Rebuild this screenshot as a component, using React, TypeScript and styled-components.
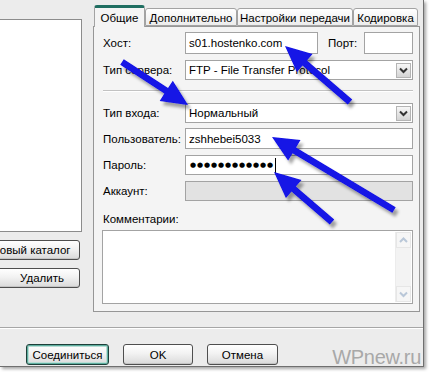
import React from "react";
import styled, { createGlobalStyle } from "styled-components";

const GlobalStyle = createGlobalStyle`
  html, body {
    margin: 0;
    padding: 0;
    background: #fff;
  }
  body {
    font-family: "Liberation Sans", Arial, sans-serif;
    font-size: 11.5px;
    color: #000;
  }
  #root {
    width: 429px;
    height: 372px;
    overflow: hidden;
  }
`;

const Window = styled.div`
  position: relative;
  width: 424px;
  height: 367px;
  box-sizing: border-box;
  background: #ececec;
  border-right: 1px solid #6f6f6f;
  border-bottom: 1px solid #6f6f6f;
  box-shadow: 2px 2px 3px rgba(0, 0, 0, 0.35);
  display: flex;
  flex-direction: column;
`;

const Top = styled.div`
  display: flex;
  align-items: flex-start;
  height: 313px;
`;

const LeftCol = styled.div`
  width: 102px;
  margin-left: -20px;
  margin-top: 19px;
  display: flex;
  flex-direction: column;
  align-items: flex-end;
`;

const ListBox = styled.div`
  width: 102px;
  height: 213px;
  box-sizing: border-box;
  background: #fff;
  border: 1px solid #8c8c8c;
`;

const Button = styled.div<{ $w: number; $default?: boolean; $indent?: number }>`
  width: ${(p) => p.$w}px;
  height: 21px;
  box-sizing: border-box;
  display: flex;
  align-items: center;
  justify-content: center;
  padding-left: ${(p) => p.$indent || 0}px;
  border: 1px solid ${(p) => (p.$default ? "#1d3f39" : "#4e4e4e")};
  border-radius: 3px;
  background: linear-gradient(#ffffff, #f2f2f2 45%, #d9d9d9);
  box-shadow: ${(p) =>
    p.$default ? "inset 0 0 0 1px #5fae9f, inset 0 0 0 2px #b9ddd5" : "inset 0 -1px 0 #c4c4c4"};
  white-space: nowrap;
`;

const SideButton = styled(Button)`
  margin-top: 8px;
  margin-right: 2px;
  height: 20px;
`;

const TabsCol = styled.div`
  width: 327px;
  margin-left: 11px;
  margin-top: 5px;
  display: flex;
  flex-direction: column;
`;

const TabStrip = styled.div`
  display: flex;
  align-items: flex-end;
  height: 21px;
  padding-left: 1px;
  position: relative;
  z-index: 1;
`;

const Tab = styled.div<{ $w: number; $active?: boolean }>`
  width: ${(p) => p.$w}px;
  height: ${(p) => (p.$active ? 22 : 18)}px;
  box-sizing: border-box;
  display: flex;
  align-items: center;
  justify-content: center;
  padding-top: ${(p) => (p.$active ? 0 : 1)}px;
  border: 1px solid #a3a3a3;
  border-bottom: ${(p) => (p.$active ? "none" : "1px solid #a3a3a3")};
  border-top: ${(p) => (p.$active ? "3px solid #1f6e61" : "1px solid #a3a3a3")};
  border-radius: 3px 3px 0 0;
  background: ${(p) => (p.$active ? "#f4f4f4" : "linear-gradient(#ffffff, #ececec)")};
  margin-bottom: ${(p) => (p.$active ? -1 : 0)}px;
  white-space: nowrap;
`;

const Panel = styled.div`
  height: 286px;
  box-sizing: border-box;
  background: #f4f4f4;
  border: 1px solid #969696;
  padding: 5px 6px 0 9px;
  display: flex;
  flex-direction: column;
`;

const Row = styled.div<{ $mt: number; $h: number }>`
  display: flex;
  align-items: center;
  margin-top: ${(p) => p.$mt}px;
  height: ${(p) => p.$h}px;
`;

const Label = styled.div<{ $w?: number }>`
  width: ${(p) => p.$w || 82}px;
  flex-shrink: 0;
  white-space: nowrap;
`;

const Field = styled.div<{ $w?: number; $disabled?: boolean }>`
  ${(p) => (p.$w ? `width: ${p.$w}px;` : "flex: 1;")}
  height: 100%;
  box-sizing: border-box;
  display: flex;
  align-items: center;
  padding-left: 3px;
  border: 1px solid #a3a3a3;
  background: ${(p) => (p.$disabled ? "#e2e2e2" : "#fff")};
  white-space: nowrap;
  overflow: hidden;
`;

const FieldText = styled.span`
  flex: 1;
  overflow: hidden;
`;

const DropButton = styled.div`
  width: 15px;
  height: 15px;
  margin-right: 1px;
  box-sizing: border-box;
  border: 1px solid #b4b4b4;
  background: linear-gradient(#f7f7f7, #d4d4d4);
  display: flex;
  align-items: center;
  justify-content: center;
`;

const PortLabel = styled.div`
  margin-left: 10px;
  width: 36px;
`;

const Separator = styled.div`
  margin-top: 10px;
  height: 0;
  border-top: 1px solid #c2c2c2;
  border-bottom: 1px solid #fff;
`;

const Dots = styled.span`
  font-family: "DejaVu Sans", sans-serif;
  font-size: 7px;
  letter-spacing: 0.9px;
  margin-left: 1px;
`;

const Caret = styled.span`
  display: inline-block;
  width: 1px;
  height: 15px;
  background: #000;
  margin-left: 1px;
`;

const CommentLabel = styled.div`
  margin-top: 11px;
  height: 14px;
  line-height: 14px;
`;

const TextArea = styled.div`
  margin-top: 4px;
  margin-left: -1px;
  height: 74px;
  box-sizing: border-box;
  border: 1px solid #a3a3a3;
  background: #fff;
  display: flex;
  justify-content: flex-end;
  padding: 1px;
`;

const ScrollBar = styled.div`
  width: 15px;
  background: #f3f3f3;
  border-left: 1px solid #ececec;
  display: flex;
  flex-direction: column;
  justify-content: space-between;
`;

const ScrollArrow = styled.div`
  height: 16px;
  box-sizing: border-box;
  border: 1px solid #e6e6e6;
  background: #f6f6f6;
  display: flex;
  align-items: center;
  justify-content: center;
`;

const BottomSep = styled.div`
  margin-top: 15px;
  border-top: 1px solid #a6a6a6;
  border-bottom: 1px solid #fff;
`;

const ButtonRow = styled.div`
  display: flex;
  align-items: center;
  gap: 14px;
  margin-top: 11px;
  padding-left: 26px;
`;

const Watermark = styled.div`
  margin-left: auto;
  margin-right: 2px;
  margin-top: 6px;
  font-family: "Liberation Sans", Arial, sans-serif;
  font-size: 20px;
  color: #a8a8a8;
  letter-spacing: -0.3px;
`;

const Overlay = styled.svg`
  position: absolute;
  left: 0;
  top: 0;
  pointer-events: none;
`;

const Chevron = ({ color = "#333" }: { color?: string }) => (
  <svg width="9" height="7" viewBox="0 0 9 7">
    <polyline points="1,1.5 4.5,5 8,1.5" fill="none" stroke={color} strokeWidth="2" />
  </svg>
);

const Select = ({ text }: { text: string }) => (
  <Field>
    <FieldText>{text}</FieldText>
    <DropButton>
      <Chevron />
    </DropButton>
  </Field>
);

const arrows = [
  [122, 62, 188, 105],
  [350, 102, 285, 46],
  [394, 210, 272, 137],
  [332, 222, 274, 172],
];

const arrowShape = (x1: number, y1: number, x2: number, y2: number) => {
  const len = Math.hypot(x2 - x1, y2 - y1);
  const ux = (x2 - x1) / len;
  const uy = (y2 - y1) / len;
  const nx = -uy;
  const ny = ux;
  const sw = 3.3;
  const hl = 26;
  const hw = 12;
  const bx = x2 - ux * hl;
  const by = y2 - uy * hl;
  const pts = [
    [x1 + nx * sw, y1 + ny * sw],
    [bx + nx * sw, by + ny * sw],
    [bx + nx * hw, by + ny * hw],
    [x2, y2],
    [bx - nx * hw, by - ny * hw],
    [bx - nx * sw, by - ny * sw],
    [x1 - nx * sw, y1 - ny * sw],
  ];
  return pts.map((p) => p.map((v) => v.toFixed(1)).join(",")).join(" ");
};

export default function App() {
  return (
    <>
      <GlobalStyle />
      <Window>
        <Top>
          <LeftCol>
            <ListBox />
            <SideButton $w={100} $indent={2}>
              Новый каталог
            </SideButton>
            <SideButton $w={100} $indent={24}>
              Удалить
            </SideButton>
          </LeftCol>
          <TabsCol>
            <TabStrip>
              <Tab $w={51} $active>
                Общие
              </Tab>
              <Tab $w={92}>Дополнительно</Tab>
              <Tab $w={116}>Настройки передачи</Tab>
              <Tab $w={65}>Кодировка</Tab>
            </TabStrip>
            <Panel>
              <Row $mt={0} $h={22}>
                <Label>Хост:</Label>
                <Field $w={133}>s01.hostenko.com</Field>
                <PortLabel>Порт:</PortLabel>
                <Field $w={49} />
              </Row>
              <Row $mt={6} $h={20}>
                <Label>Тип сервера:</Label>
                <Select text="FTP - File Transfer Protocol" />
              </Row>
              <Separator />
              <Row $mt={11} $h={20}>
                <Label>Тип входа:</Label>
                <Select text="Нормальный" />
              </Row>
              <Row $mt={5} $h={21}>
                <Label>Пользователь:</Label>
                <Field>zshhebei5033</Field>
              </Row>
              <Row $mt={6} $h={20}>
                <Label>Пароль:</Label>
                <Field>
                  <Dots>●●●●●●●●●●●●</Dots>
                  <Caret />
                </Field>
              </Row>
              <Row $mt={6} $h={20}>
                <Label>Аккаунт:</Label>
                <Field $disabled />
              </Row>
              <CommentLabel>Комментарии:</CommentLabel>
              <TextArea>
                <ScrollBar>
                  <ScrollArrow>
                    <svg width="9" height="6" viewBox="0 0 9 6">
                      <polyline points="1,5 4.5,1.5 8,5" fill="none" stroke="#b9c7d8" strokeWidth="2" />
                    </svg>
                  </ScrollArrow>
                  <ScrollArrow>
                    <Chevron color="#b9c7d8" />
                  </ScrollArrow>
                </ScrollBar>
              </TextArea>
            </Panel>
          </TabsCol>
        </Top>
        <BottomSep />
        <ButtonRow>
          <Button $w={83} $default>
            Соединиться
          </Button>
          <Button $w={70}>OK</Button>
          <Button $w={71}>Отмена</Button>
          <Watermark>WPnew.ru</Watermark>
        </ButtonRow>
        <Overlay width="429" height="372" viewBox="0 0 429 372">
          <defs>
            <filter id="arrowShadow" x="-20%" y="-20%" width="140%" height="140%">
              <feDropShadow dx="3" dy="4" stdDeviation="1.8" floodColor="#000" floodOpacity="0.35" />
            </filter>
          </defs>
          {arrows.map(([x1, y1, x2, y2], i) => (
            <polygon
              key={i}
              points={arrowShape(x1, y1, x2, y2)}
              fill="#1212e6"
              filter="url(#arrowShadow)"
            />
          ))}
        </Overlay>
      </Window>
    </>
  );
}
